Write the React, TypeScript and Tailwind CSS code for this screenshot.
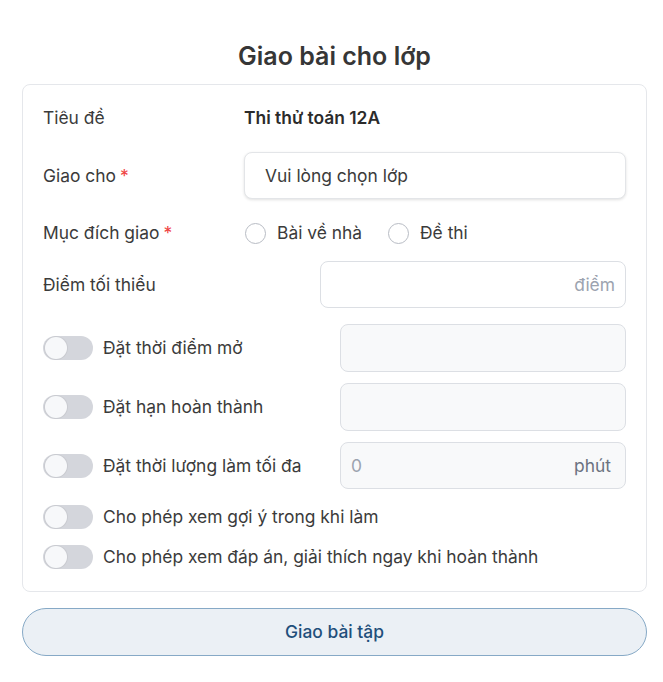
import React from 'react'

function Toggle() {
	return (
		<div className="w-[50px] h-6 rounded-full bg-[#d4d6dc] flex items-center px-[2px] shrink-0">
			<div className="w-[22px] h-[22px] rounded-full bg-[#f7f8fa] shadow-[0_0_0_1px_rgba(0,0,0,0.05)]"></div>
		</div>
	)
}

function Radio({ label }: { label: string }) {
	return (
		<div className="flex flex-row items-center gap-[11px]">
			<div className="w-[21px] h-[21px] rounded-full border border-[#b8bcc4] bg-white"></div>
			<span>{label}</span>
		</div>
	)
}

function Req() {
	return <span className="text-[#ef4444] ml-1">*</span>
}

function ToggleRow({ label, mt, h, children }: { label: string; mt: string; h: string; children?: React.ReactNode }) {
	return (
		<div className={`flex flex-row items-center ${mt}`}>
			<div className="w-[297px] flex flex-row items-center gap-[10px]">
				<Toggle />
				<span>{label}</span>
			</div>
			<div className={`flex-1 ${h} rounded-lg border border-[#dcdfe4] bg-[#f8f9fa] flex flex-row items-center justify-between px-[10px] text-[#9ca3af]`}>
				{children}
			</div>
		</div>
	)
}

export default function App() {
	return (
		<main className="w-[663px] min-h-[682px] bg-white pt-10 pl-[22px] pr-4" style={{ fontFamily: 'Inter, "Noto Sans", sans-serif' }}>
			<h1 className="text-center text-[25px] leading-8 font-semibold text-[#363636] mb-3">Giao bài cho lớp</h1>

			<section className="border border-[#e5e7eb] rounded-lg px-5 pt-5 pb-[22px] text-[17.4px] leading-6 text-[#3b3b3b] flex flex-col">
				<div className="flex flex-row items-center h-[26px]">
					<span className="w-[201px]">Tiêu đề</span>
					<span className="font-semibold text-[#2b2b2b]">Thi thử toán 12A</span>
				</div>

				<div className="flex flex-row items-center mt-[21px]">
					<span className="w-[201px]">Giao cho<Req /></span>
					<div className="flex-1 h-[47px] rounded-lg border border-[#e3e5e8] bg-white shadow-[0_1px_3px_rgba(0,0,0,0.12)] flex items-center px-5">
						Vui lòng chọn lớp
					</div>
				</div>

				<div className="flex flex-row items-center h-6 mt-[22px]">
					<span className="w-[202px]">Mục đích giao<Req /></span>
					<div className="flex flex-row items-center gap-[26px]">
						<Radio label="Bài về nhà" />
						<Radio label="Đề thi" />
					</div>
				</div>

				<div className="flex flex-row items-center mt-4">
					<span className="w-[277px]">Điểm tối thiểu</span>
					<div className="flex-1 h-[47px] rounded-lg border border-[#dcdfe4] bg-white flex items-center justify-end px-[10px] text-[#9ca3af]">
						điểm
					</div>
				</div>

				<ToggleRow label="Đặt thời điểm mở" mt="mt-4" h="h-12" />
				<ToggleRow label="Đặt hạn hoàn thành" mt="mt-[11px]" h="h-12">
				</ToggleRow>
				<ToggleRow label="Đặt thời lượng làm tối đa" mt="mt-[11px]" h="h-[47px]">
					<span>0</span>
					<span className="text-[#6b7280] pr-1">phút</span>
				</ToggleRow>

				<div className="flex flex-row items-center gap-[10px] h-6 mt-4">
					<Toggle />
					<span>Cho phép xem gợi ý trong khi làm</span>
				</div>
				<div className="flex flex-row items-center gap-[10px] h-6 mt-4">
					<Toggle />
					<span>Cho phép xem đáp án, giải thích ngay khi hoàn thành</span>
				</div>
			</section>

			<button className="w-full h-12 mt-4 rounded-full border border-[#86a9c6] bg-[#ebf0f5] text-[#1f4f7b] font-medium text-[17.4px]">
				Giao bài tập
			</button>
		</main>
	)
}
